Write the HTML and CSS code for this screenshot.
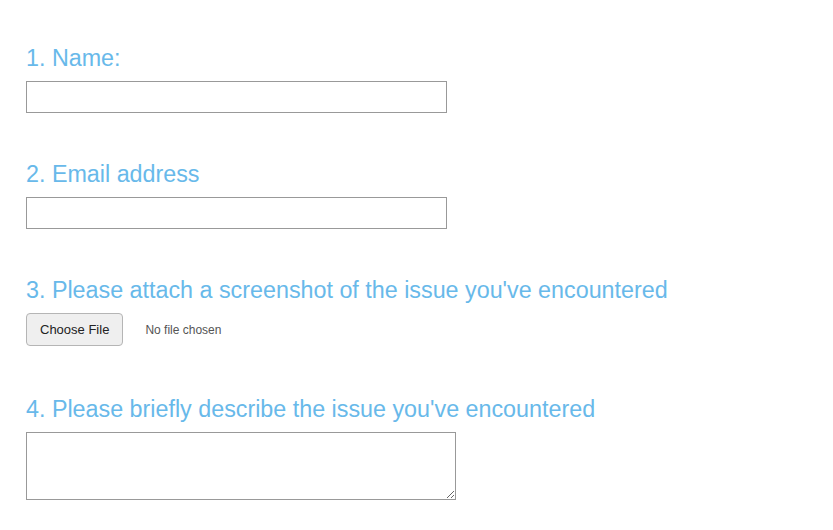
FILE: index.html
```html
<!DOCTYPE html>
<html lang="en">
<head>
  <meta charset="UTF-8" />
  <meta name="viewport" content="width=device-width, initial-scale=1" />
  <title>Report an issue</title>
  <link rel="stylesheet" href="styles.css">
</head>
<body>
  <form class="report-form">
    <div class="field">
      <label for="name">1. Name:</label>
      <input type="text" id="name" class="text-input" />
    </div>

    <div class="field">
      <label for="email">2. Email address</label>
      <input type="email" id="email" class="text-input" />
    </div>

    <div class="field field-file">
      <label>3. Please attach a screenshot of the issue you've encountered</label>
      <div class="file-row">
        <button type="button" class="file-button">Choose File</button>
        <span class="file-status">No file chosen</span>
      </div>
    </div>

    <div class="field">
      <label for="issue">4. Please briefly describe the issue you've encountered</label>
      <textarea id="issue" class="text-area"></textarea>
    </div>
  </form>
</body>
</html>
```

FILE: styles.css
```css
body {
  margin: 0;
  background: #ffffff;
  font-family: "Liberation Sans", Arial, sans-serif;
}

.report-form {
  padding: 42px 26px 0;
}

.field {
  margin-bottom: 45px;
}

.field label {
  display: block;
  font-size: 23.3px;
  line-height: 28px;
  color: #68b9ea;
  padding-top: 2px;
  margin-bottom: 9px;
}

.text-input {
  display: block;
  box-sizing: border-box;
  width: 421px;
  height: 32px;
  margin: 0;
  border: 1px solid #999999;
  border-radius: 0;
  padding: 4px 6px;
  font-size: 14px;
}

.file-row {
  display: flex;
  align-items: center;
  gap: 22px;
}

.file-button {
  box-sizing: border-box;
  height: 33px;
  padding: 0 13px;
  background: #efefef;
  border: 1px solid #b5b5b5;
  border-radius: 4px;
  font-family: "Liberation Sans", Arial, sans-serif;
  font-size: 13px;
  color: #222222;
}

.file-status {
  font-size: 12px;
  color: #555555;
}

.field-file {
  margin-bottom: 47px;
}

.text-area {
  display: block;
  box-sizing: border-box;
  width: 430px;
  height: 68px;
  margin: 0;
  border: 1px solid #999999;
  border-radius: 0;
  padding: 4px 6px;
}
```
